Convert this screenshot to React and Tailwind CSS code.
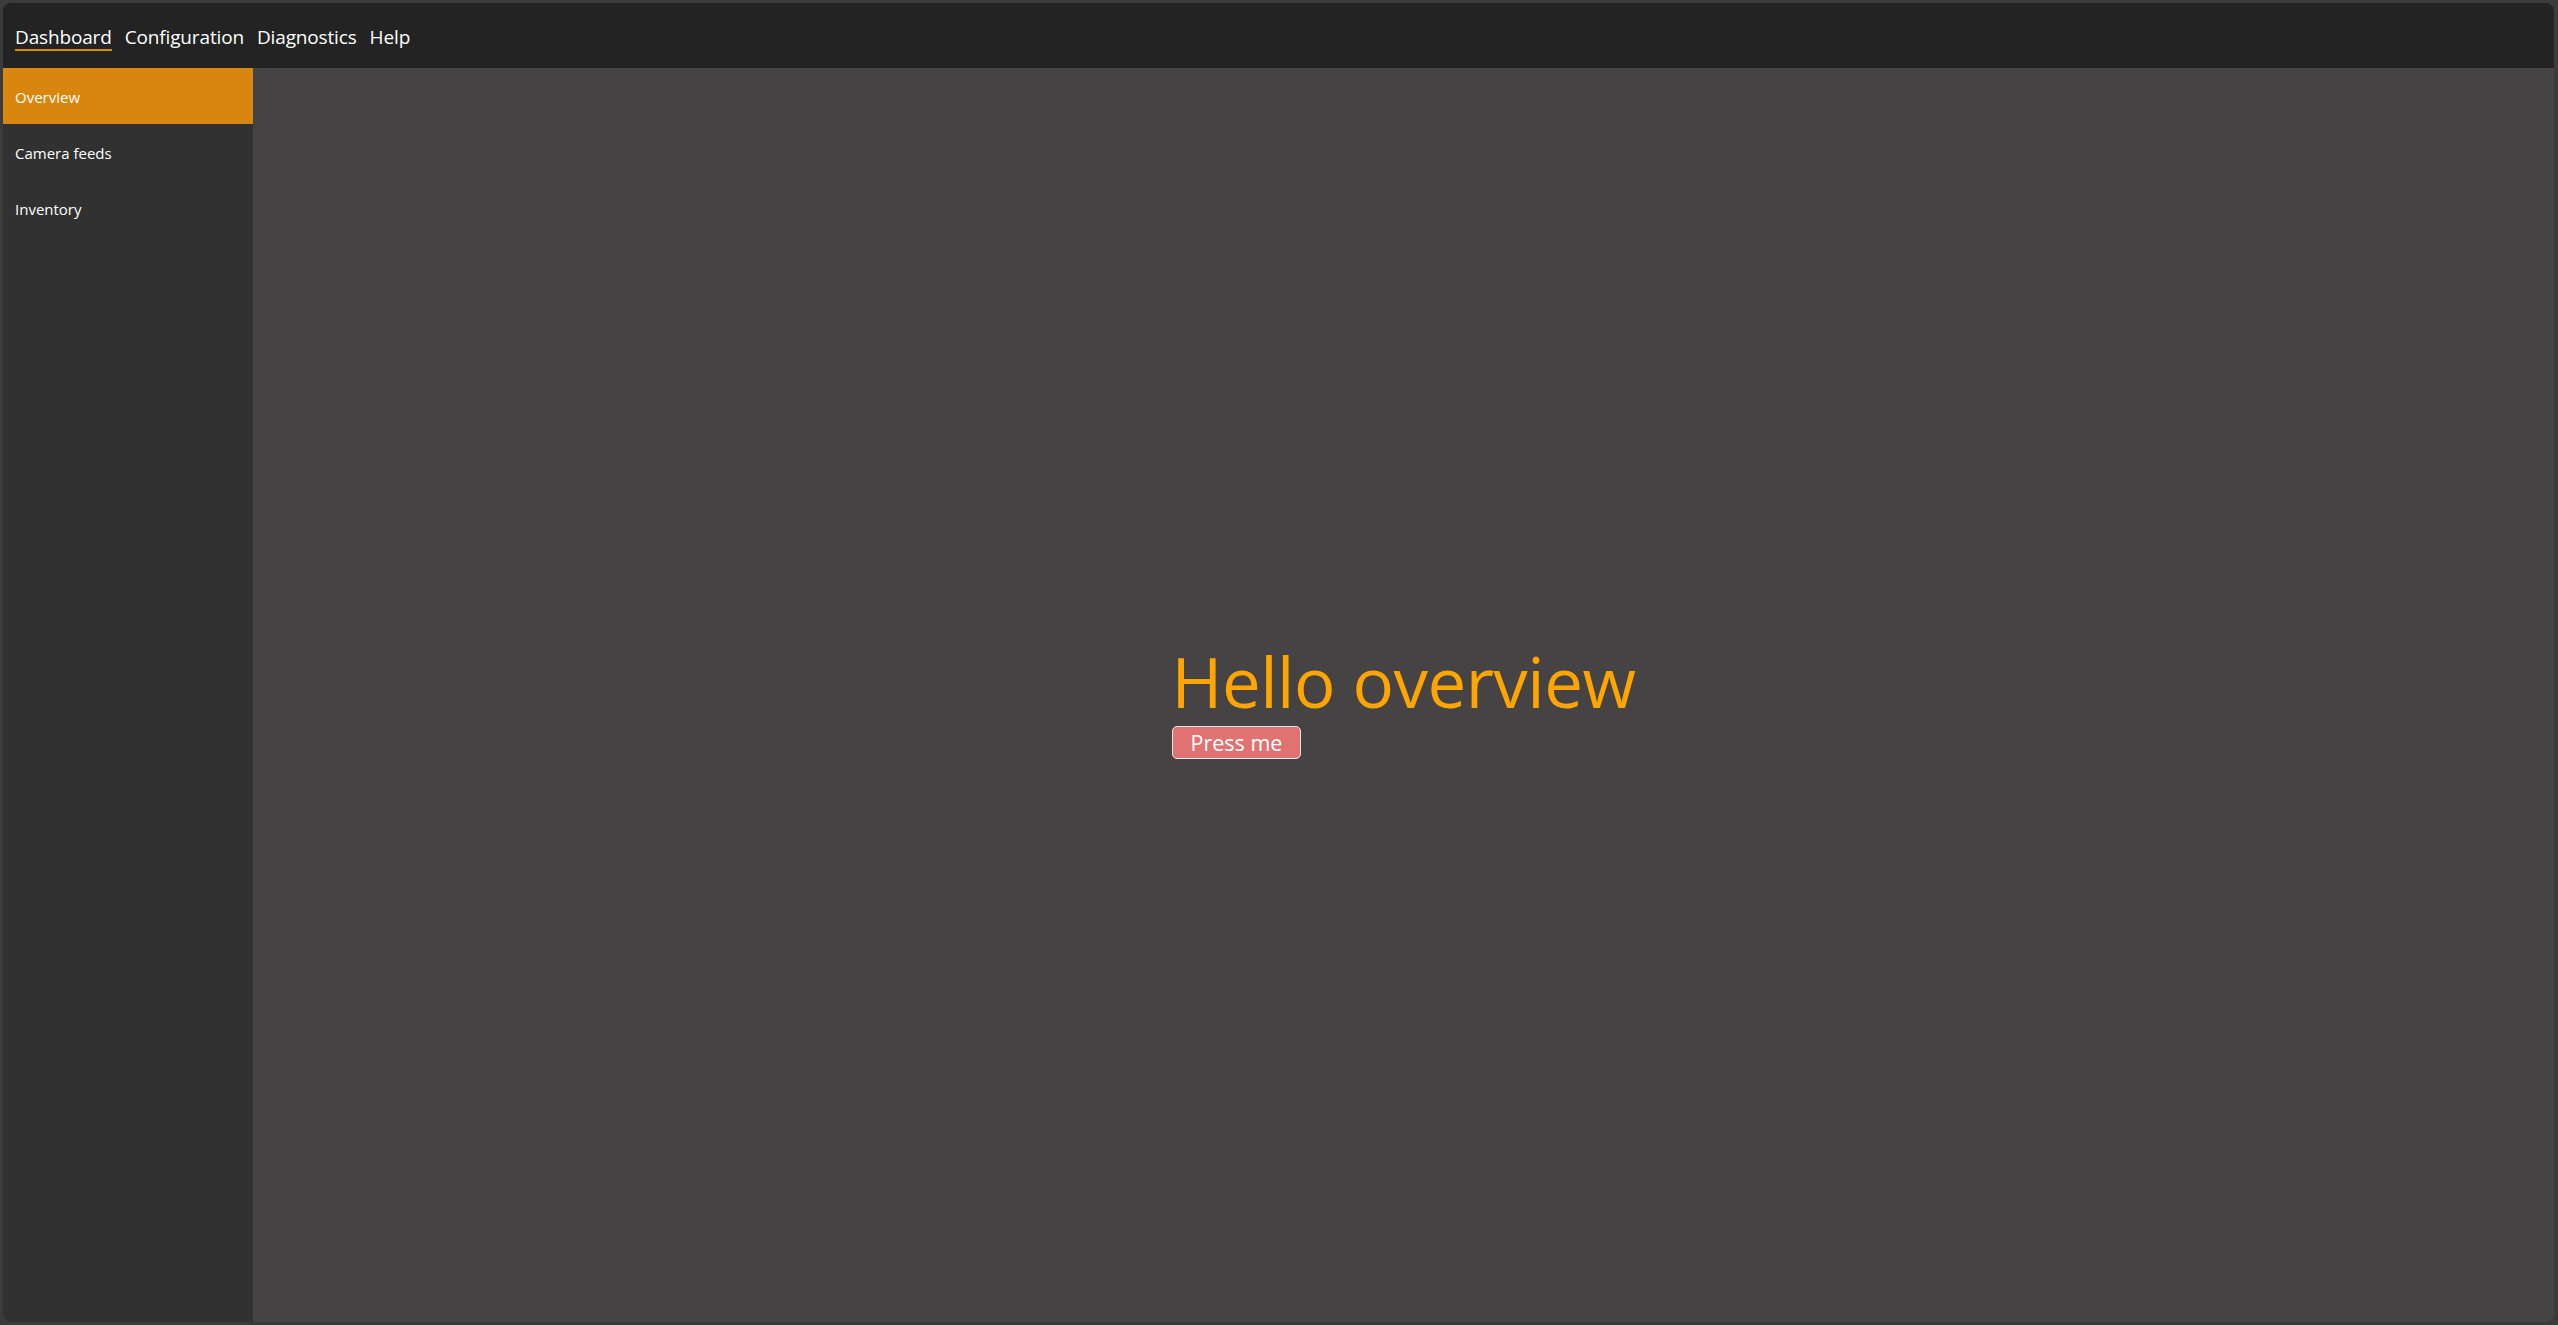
import React, { useState } from 'react';

const tabs = ['Dashboard', 'Configuration', 'Diagnostics', 'Help'];
const pages = ['Overview', 'Camera feeds', 'Inventory'];

const App = () => {
  const [tab, setTab] = useState('Dashboard');
  const [page, setPage] = useState('Overview');

  return (
    <div className="h-[1325px] w-[2558px] bg-[#3b3b3b] pt-[3px] pl-[3px] pr-[4px] pb-[3px] font-['Open_Sans',sans-serif]">
      <div className="flex h-full flex-col overflow-hidden rounded-[8px] bg-[#454344]">
        {/* barra superior */}
        <div className="flex h-[65px] shrink-0 items-start gap-[13px] bg-[#232323] px-[12px] pt-[22px]">
          {tabs.map((t) => (
            <button
              key={t}
              onClick={() => setTab(t)}
              className={`border-b-2 text-[19px] leading-[24px] tracking-[-0.15px] text-white ${
                tab === t ? 'border-[#d9860f]' : 'border-transparent'
              }`}
            >
              {t}
            </button>
          ))}
        </div>

        <div className="flex min-h-0 flex-1">
          {/* menu lateral */}
          <div className="w-[250px] shrink-0 bg-[#313131]">
            {pages.map((p) => (
              <button
                key={p}
                onClick={() => setPage(p)}
                className={`flex h-[56px] w-full items-center px-[12px] pt-[3px] text-left text-[15px] text-white ${
                  page === p ? 'bg-[#d9860f]' : ''
                }`}
              >
                {p}
              </button>
            ))}
          </div>

          {/* contenido */}
          <div className="flex flex-1 items-center justify-center">
            <div className="flex flex-col items-start pt-[8px]">
              <h1 className="text-[69px] leading-[84px] tracking-[-0.5px] text-[#ffa500]">
                Hello {page.toLowerCase()}
              </h1>
              <button className="mt-[3px] h-[33px] rounded-[5px] border border-[#f2e6e6] bg-[#e07272] px-[18px] text-[21.5px] leading-[30px] text-white">
                Press me
              </button>
            </div>
          </div>
        </div>
      </div>
    </div>
  );
};

export default App;
